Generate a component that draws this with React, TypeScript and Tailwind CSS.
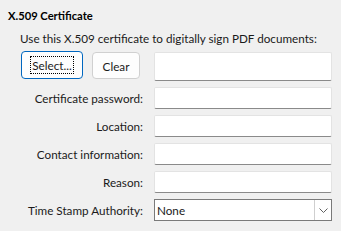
const FIELDS = ["Certificate password:", "Location:", "Contact information:", "Reason:"];

function Field({ tall }: { tall?: boolean }) {
  return (
    <div
      className={
        "w-[178px] rounded-[2px] border border-[#e3e3e3] border-b-[#8a8a8a] bg-white " +
        (tall ? "h-[29px]" : "h-[22px]")
      }
    />
  );
}

export default function App() {
  return (
    <div className="h-[231px] w-[341px] whitespace-nowrap bg-[#f0f0f0] text-[11.7px] leading-[16px] text-[#1a1a1a] [font-family:Lato,sans-serif]">
      <div className="pl-[8px] pt-[8px] text-[11.2px] font-bold text-black">X.509 Certificate</div>
      <div className="mt-[6px] pl-[20px]">Use this X.509 certificate to digitally sign PDF documents:</div>
      <div className="mt-[5px] flex flex-col gap-[6px]">
        <div className="flex items-start">
          <button className="ml-[21px] flex h-[28px] w-[62px] items-center justify-center rounded-[4px] border border-[#0067c0] bg-[#fdfdfd]">
            <span className="border border-dotted border-black px-[1px] py-[1px] leading-[14px]">Select...</span>
          </button>
          <button className="ml-[9px] mt-[1px] h-[27px] w-[48px] rounded-[4px] border border-[#d0d0d0] bg-[#fdfdfd]">
            Clear
          </button>
          <div className="ml-[14px] mt-[1px]">
            <Field tall />
          </div>
        </div>
        {FIELDS.map((label) => (
          <div key={label} className="flex items-center">
            <div className="w-[144px] pr-[1px] text-right">{label}</div>
            <div className="ml-[10px]">
              <Field />
            </div>
          </div>
        ))}
        <div className="flex items-center">
          <div className="w-[144px] pr-[1px] text-right">Time Stamp Authority:</div>
          <div className="ml-[10px] flex h-[22px] w-[178px] items-center border border-[#7a7a7a] bg-white">
            <span className="flex-1 pl-[2px]">None</span>
            <div className="flex h-[20px] w-[17px] items-center justify-center border-l border-[#cfcfcf] bg-white">
              <svg width="9" height="5" viewBox="0 0 9 5" fill="none" stroke="#606060" strokeWidth="1">
                <path d="M0.5 0.5 L4.5 4.5 L8.5 0.5" />
              </svg>
            </div>
          </div>
        </div>
      </div>
    </div>
  );
}
